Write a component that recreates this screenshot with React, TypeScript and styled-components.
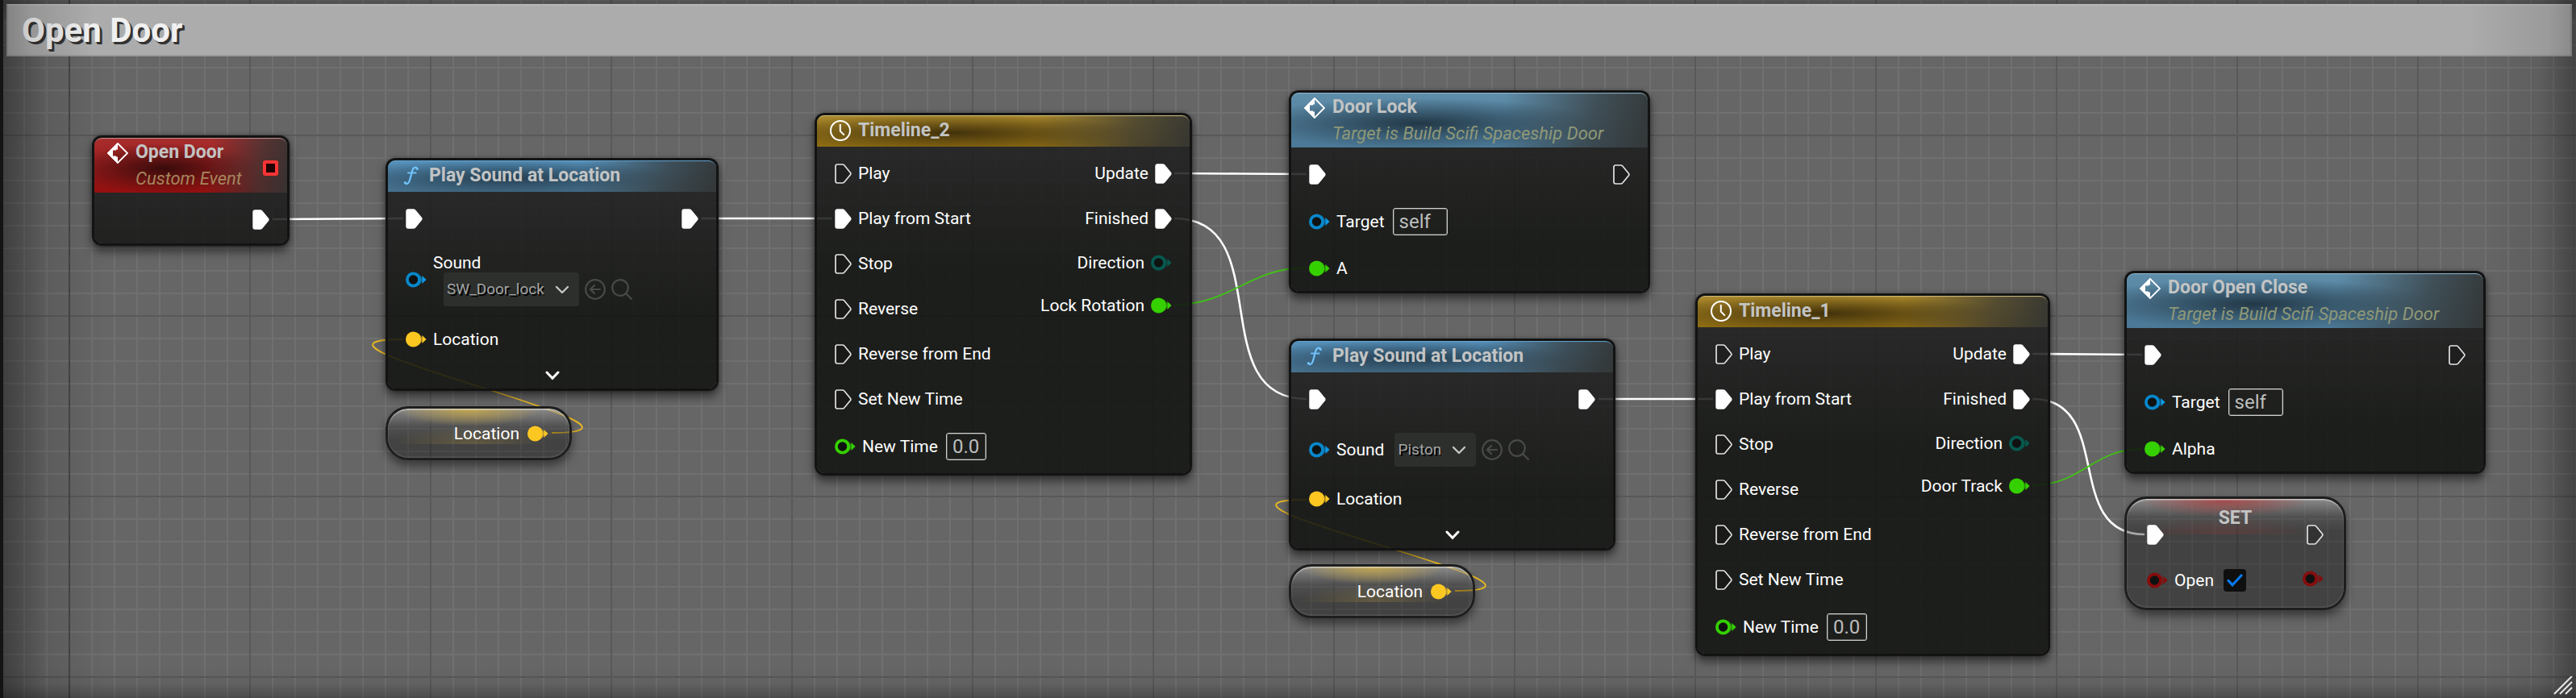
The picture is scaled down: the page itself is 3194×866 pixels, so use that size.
import React, { ReactNode } from "react";
import styled, { createGlobalStyle, css } from "styled-components";

const GlobalStyle = createGlobalStyle`
  *, *::before, *::after { box-sizing: border-box; }
  html, body { margin: 0; background: #141414; }
  body { font-family: Roboto, "Open Sans", sans-serif; color: #fff; }
  button, input, select { font: inherit; color: inherit; margin: 0; }
  button { padding: 0; border: 0; background: none; cursor: pointer; }
  svg { display: block; }
`;

/* ---------- canvas ---------- */

const Graph = styled.main`
  position: relative;
  min-height: 100vh;
  padding: 5px 5px 0 4px;
  overflow: hidden;
  border-left: 4px solid #141414;
  background:
    linear-gradient(90deg, rgba(0, 0, 0, 0.38), rgba(0, 0, 0, 0.26) 24px, rgba(0, 0, 0, 0.1) 52px, transparent 130px),
    linear-gradient(270deg, rgba(0, 0, 0, 0.34), rgba(0, 0, 0, 0.22) 20px, rgba(0, 0, 0, 0.08) 46px, transparent 120px),
    linear-gradient(0deg, rgba(0, 0, 0, 0.26), rgba(0, 0, 0, 0.05) 18px, transparent 40px),
    linear-gradient(180deg, rgba(0, 0, 0, 0.22), transparent 30px),
    linear-gradient(#464646, #464646) 81px 0 / 2px 100% no-repeat,
    linear-gradient(90deg, #595959 2px, transparent 2px) 81px 0 / 224px 224px,
    linear-gradient(180deg, #595959 2px, transparent 2px) 0 167px / 224px 224px,
    linear-gradient(90deg, #707070 2px, transparent 2px) 25px 0 / 28px 28px,
    linear-gradient(180deg, #707070 2px, transparent 2px) 0 27px / 28px 28px,
    #666;
`;

const CommentBar = styled.header`
  position: relative;
  display: flex;
  align-items: center;
  height: 65px;
  padding: 0 17px;
  background: #acacac;
  border: 2px solid #9a9a9a;
  border-top-color: #b8b8b8;
  &::after {
    content: "";
    position: absolute;
    inset: -2px;
    pointer-events: none;
    background:
      linear-gradient(90deg, rgba(0, 0, 0, 0.24), rgba(0, 0, 0, 0.13) 30px, transparent 110px),
      linear-gradient(270deg, rgba(0, 0, 0, 0.2), rgba(0, 0, 0, 0.1) 30px, transparent 130px);
  }
`;

const CommentTitle = styled.h1`
  margin: 0;
  font-size: 42px;
  line-height: 48px;
  font-weight: 700;
  color: #f0f0f0;
  text-shadow: 2px 2px 0 #333, 3px 3px 0 #333;
`;

const Wires = styled.svg`
  position: absolute;
  left: -4px;
  top: 0;
  overflow: visible;
  pointer-events: none;
  fill: none;
`;

const Resizer = styled.svg`
  position: absolute;
  right: 4px;
  bottom: 4px;
`;

/* ---------- nodes ---------- */

interface Placed { $x: number; $y: number; $w: number }

const placed = css<Placed>`
  position: absolute;
  left: ${p => p.$x - 4}px;
  top: ${p => p.$y}px;
  width: ${p => p.$w}px;
`;

const NodeBox = styled.article<Placed>`
  ${placed}
  border: 3px solid #121312;
  border-radius: 12px;
  background: linear-gradient(180deg, rgba(29, 30, 29, 0.86) 42px, rgba(16, 18, 15, 0.86) 190px) padding-box;
  box-shadow: 0 7px 12px rgba(0, 0, 0, 0.5), 0 0 4px rgba(0, 0, 0, 0.35);
`;

const tones = {
  red: { top: "#a82d2d", base: "#940f0f", dark: "rgba(52, 10, 10, 0.95)", shine: "#c98f8f" },
  blue: { top: "#5f8eab", base: "#4a7896", dark: "rgba(32, 52, 66, 0.95)", shine: "#8fb4cc" },
  sky: { top: "#5590ba", base: "#47718d", dark: "rgba(32, 54, 70, 0.9)", shine: "#65a5d0" },
  gold: { top: "#a8872c", base: "#8f6d12", dark: "rgba(62, 46, 10, 0.95)", shine: "#d2bd80" },
};
type Tone = keyof typeof tones;

const NodeHeader = styled.header<{ $tone: Tone; $tall: boolean }>`
  display: flex;
  align-items: ${p => (p.$tall ? "flex-start" : "center")};
  gap: 9px;
  height: ${p => (p.$tall ? 68 : 39)}px;
  padding: ${p => (p.$tall ? "6px 11px 0 16px" : "0 11px 2px 16px")};
  border-radius: 9px 9px 0 0;
  box-shadow: inset 0 2px 1px -1px ${p => tones[p.$tone].shine};
  background:
    linear-gradient(100deg, transparent 58%, rgba(52, 54, 53, 0.7) 84%, rgba(50, 52, 51, 0.95) 100%),
    radial-gradient(ellipse ${p => (p.$tall ? "50% 46%" : "52% 58%")} at 36% 56%, ${p => tones[p.$tone].dark}, transparent),
    linear-gradient(180deg, ${p => tones[p.$tone].top}, ${p => tones[p.$tone].base});
`;

const IconSlot = styled.span`
  display: flex;
  flex: none;
  justify-content: center;
  width: 26px;
`;

const Titles = styled.div`
  flex: 1;
  white-space: nowrap;
`;

const NodeTitle = styled.h2`
  margin: 0;
  font-size: 23px;
  line-height: 24px;
  font-weight: 700;
  color: #c2c4c4;
`;

const Subtitle = styled.p<{ $color: string }>`
  margin: 9px 0 0;
  font-size: 22px;
  line-height: 24px;
  font-style: italic;
  color: ${p => p.$color};
`;

const DelegateButton = styled.button`
  align-self: center;
  width: 19px;
  height: 19px;
  border: 4px solid #ff3434;
  border-radius: 3px;
  background: #210202;
`;

const Body = styled.div<{ $flush?: boolean }>`
  display: flex;
  flex-direction: column;
  padding: 5px 0 ${p => (p.$flush ? 0 : 2)}px;
`;

const Columns = styled.div`
  display: flex;
  justify-content: space-between;
  padding: 0 22px;
`;

const Column = styled.div<{ $end?: boolean }>`
  display: flex;
  flex-direction: column;
  align-items: ${p => (p.$end ? "flex-end" : "flex-start")};
`;

const Row = styled.div<{ $h: number }>`
  display: flex;
  align-items: center;
  gap: 8px;
  height: ${p => p.$h}px;
`;

const labelText = css`
  font-size: 21px;
  line-height: 24px;
  white-space: nowrap;
  color: #fff;
`;

const PinText = styled.span`${labelText}`;
const FieldLabel = styled.label`${labelText}`;

const ValueInput = styled.input<{ $w: number }>`
  width: ${p => p.$w}px;
  height: 34px;
  padding: 0 7px;
  border: 1px solid #d0d1d0;
  border-radius: 3px;
  outline: 1px solid rgba(196, 197, 196, 0.35);
  outline-offset: -2px;
  background: transparent;
  font-size: 24px;
  line-height: 24px;
  color: #bcbdbc;
  && { margin-left: 2px; }
`;

const SoundField = styled.div<{ $stacked: boolean }>`
  display: flex;
  flex-direction: ${p => (p.$stacked ? "column" : "row")};
  align-items: ${p => (p.$stacked ? "flex-start" : "center")};
  gap: ${p => (p.$stacked ? 0 : 13)}px;
`;

const AssetPicker = styled.div<{ $indent: boolean }>`
  display: flex;
  align-items: center;
  gap: 7px;
  margin-left: ${p => (p.$indent ? 13 : 0)}px;
`;

const SelectWrap = styled.div`
  position: relative;
  svg {
    position: absolute;
    right: 12px;
    top: 16px;
    pointer-events: none;
  }
`;

const AssetSelect = styled.select`
  appearance: none;
  height: 42px;
  padding: 0 43px 0 4px;
  border: 0;
  border-radius: 4px;
  background: #2d2f2d;
  font-size: 19px;
  line-height: 24px;
  color: #a4a5a4;
  text-shadow: 2px 2px 0 #000;
`;

const ExpandButton = styled.button`
  display: flex;
  align-items: center;
  justify-content: center;
  height: 35px;
  && { padding-top: 3px; }
`;

const glass = css<{ $glow: string }>`
  border: 3px solid #1d1e1d;
  border-radius: 28px;
  background:
    radial-gradient(ellipse 40% 100% at 45% 0, rgba(${p => p.$glow}, 0.75), transparent) 0 0 / 100% 22px no-repeat padding-box,
    radial-gradient(ellipse 42% 100% at 45% 100%, rgba(${p => p.$glow}, 0.22), transparent) 0 22px / 100% 22px no-repeat padding-box,
    linear-gradient(180deg, rgba(255, 255, 255, 0.38), rgba(255, 255, 255, 0.08) 22px, transparent 40px) padding-box,
    rgba(0, 0, 0, 0.35) padding-box;
  box-shadow: 0 7px 12px rgba(0, 0, 0, 0.45), inset 0 2px 2px -1px rgba(255, 255, 255, 0.8), inset 0 -1px 2px rgba(255, 255, 255, 0.15);
`;

const VariableNode = styled.article<Placed & { $glow: string }>`
  ${placed}
  ${glass}
  display: flex;
  align-items: center;
  justify-content: flex-end;
  gap: 10px;
  height: 67px;
  padding-right: 26px;
`;

const SetNode = styled.article<Placed & { $glow: string }>`
  ${placed}
  ${glass}
  padding: 12px 25px 6px;
`;

const SetTitle = styled(NodeTitle)`
  text-align: center;
`;

const SetPins = styled.div`
  display: flex;
  justify-content: space-between;
  margin-top: -20px;
`;

const CheckWrap = styled.span`
  display: grid;
  place-items: center;
  width: 28px;
  height: 28px;
  margin-left: 4px;
  > * { grid-area: 1 / 1; }
  svg { pointer-events: none; }
`;

const CheckInput = styled.input`
  appearance: none;
  width: 28px;
  height: 28px;
  border-radius: 4px;
  background: #0e0f0e;
  & + svg { visibility: hidden; }
  &:checked + svg { visibility: visible; }
`;

/* ---------- icons ---------- */

const ExecPin = ({ on }: { on?: boolean }) => (
  <svg width="21" height="25" viewBox="0 0 21 25">
    <path
      d="M1 3.2Q1 1 3.2 1H9.5Q10.8 1 11.8 2L19.4 11.2Q20.4 12.5 19.4 13.8L11.8 23Q10.8 24 9.5 24H3.2Q1 24 1 21.8Z"
      fill={on ? "#fff" : "rgba(20,21,20,.35)"} stroke={on ? "#fff" : "#e2e2e2"} strokeWidth={on ? 1.4 : 1.7}
    />
  </svg>
);

const DataPin = ({ color, on, edge }: { color: string; on?: boolean; edge?: string }) => (
  <svg width="26" height="20" viewBox="0 0 26 20">
    <path d="M12 1.5Q19 3 21 10Q19 17 12 18.5Z" fill={color} opacity=".6" />
    {on
      ? <circle cx="9.5" cy="10" r="9.5" fill={color} />
      : <circle cx="9.5" cy="10" r="7.6" fill="#0f1211" stroke={color} strokeWidth="3.8" />}
    <path d="M20.4 5L25.6 10L20.4 15Z" fill={edge || color} />
  </svg>
);

const EventIcon = () => (
  <svg width="26" height="26" viewBox="0 0 26 26">
    <path d="M13 1L25 13L13 25L1 13Z" fill="none" stroke="#fff" strokeWidth="1.8" />
    <path fillRule="evenodd" d="M13 0L0 13L13 26V17.5H11V16.5H7V9.5H11V8.5H13Z" fill="#fff" />
  </svg>
);

const FunctionIcon = () => (
  <svg width="20" height="24" viewBox="0 0 20 24">
    <g fill="none" stroke="#6fc0f8" strokeLinecap="round">
      <path d="M17.4 3.4C16 .9 12.6 1.2 11.4 5.2L7.8 18.2C6.8 21.8 3.9 23 2 21" strokeWidth="2.3" />
      <path d="M6 8.6H15.6" strokeWidth="2" />
    </g>
    <circle cx="17.4" cy="3.4" r="1.5" fill="#6fc0f8" />
    <circle cx="2.4" cy="20.6" r="1.6" fill="#6fc0f8" />
  </svg>
);

const ClockIcon = () => (
  <svg width="26" height="26" viewBox="0 0 26 26" fill="none" stroke="#fff">
    <circle cx="13" cy="13" r="12" strokeWidth="2" />
    <path d="M12.8 5V13.6L17.8 18.6" strokeWidth="2" />
  </svg>
);

const SmallChevron = () => (
  <svg width="18" height="11" viewBox="0 0 18 11" fill="none" stroke="#c4c5c4" strokeWidth="2.4" strokeLinecap="round" strokeLinejoin="round">
    <path d="M2 2L9 9L16 2" />
  </svg>
);

const ExpandIcon = () => (
  <svg width="18" height="12" viewBox="0 0 18 12" fill="none" stroke="#fff" strokeWidth="3" strokeLinecap="round">
    <path d="M2 2L9 9.4L16 2" />
  </svg>
);

const UseIcon = () => (
  <svg width="26" height="26" viewBox="0 0 26 26" fill="none" stroke="#484a48" strokeWidth="2.2" strokeLinecap="round">
    <circle cx="13" cy="13" r="11.8" />
    <path d="M19 13H7.5M12 8L7 13L12 18" />
  </svg>
);

const BrowseIcon = () => (
  <svg width="26" height="26" viewBox="0 0 26 26" fill="none" stroke="#484a48" strokeWidth="2.2" strokeLinecap="round">
    <circle cx="11" cy="11" r="9.8" />
    <path d="M18 18L25 25" />
  </svg>
);

const CheckIcon = () => (
  <svg width="20" height="16" viewBox="0 0 20 16" fill="none" stroke="#0a78ee" strokeWidth="3.2" strokeLinecap="round">
    <path d="M2 8.4L7 13.8L18 2" />
  </svg>
);

/* ---------- node kinds ---------- */

const BLUE = "#0887cb";
const GREEN = "#35d000";
const YELLOW = "#fdc722";
const TEAL = "#06594f";
const RED = "#850d0d";

interface NodeProps extends Placed {
  tone: Tone;
  icon: ReactNode;
  title: string;
  subtitle?: string;
  subtitleColor?: string;
  action?: ReactNode;
  flush?: boolean;
  children: ReactNode;
}

const GraphNode = ({ tone, icon, title, subtitle, subtitleColor = "#8f9877", action, flush, children, ...place }: NodeProps) => (
  <NodeBox {...place}>
    <NodeHeader $tone={tone} $tall={!!subtitle}>
      <IconSlot>{icon}</IconSlot>
      <Titles>
        <NodeTitle>{title}</NodeTitle>
        {subtitle && <Subtitle $color={subtitleColor}>{subtitle}</Subtitle>}
      </Titles>
      {action}
    </NodeHeader>
    <Body $flush={flush}>{children}</Body>
  </NodeBox>
);

const PlaySoundNode = ({ id, sound, stacked, ...place }: Placed & { id: string; sound: string; stacked: boolean }) => (
  <GraphNode {...place} tone="sky" icon={<FunctionIcon />} title="Play Sound at Location" flush>
    <Columns>
      <Column>
        <Row $h={56}><ExecPin on /></Row>
        <Row $h={stacked ? 96 : 70}>
          <DataPin color={BLUE} edge="#0d9ae6" />
          <SoundField $stacked={stacked}>
            <FieldLabel htmlFor={id}>Sound</FieldLabel>
            <AssetPicker $indent={stacked}>
              <SelectWrap>
                <AssetSelect id={id}><option>{sound}</option></AssetSelect>
                <SmallChevron />
              </SelectWrap>
              <button type="button" aria-label="Use selected asset"><UseIcon /></button>
              <button type="button" aria-label="Browse to asset"><BrowseIcon /></button>
            </AssetPicker>
          </SoundField>
        </Row>
        <Row $h={52}><DataPin color={YELLOW} on /><PinText>Location</PinText></Row>
      </Column>
      <Column $end>
        <Row $h={56}><ExecPin on /></Row>
      </Column>
    </Columns>
    <ExpandButton type="button" aria-label="Show more pins"><ExpandIcon /></ExpandButton>
  </GraphNode>
);

const timelineInputs = ["Play", "Play from Start", "Stop", "Reverse", "Reverse from End", "Set New Time"];

const TimelineNode = ({ id, name, track, ...place }: Placed & { id: string; name: string; track: string }) => (
  <GraphNode {...place} tone="gold" icon={<ClockIcon />} title={name}>
    <Columns>
      <Column>
        {timelineInputs.map(label => (
          <Row $h={56} key={label}>
            <ExecPin on={label === "Play from Start"} />
            <PinText>{label}</PinText>
          </Row>
        ))}
        <Row $h={62}>
          <DataPin color={GREEN} />
          <FieldLabel htmlFor={id}>New Time</FieldLabel>
          <ValueInput id={id} $w={50} defaultValue="0.0" />
        </Row>
      </Column>
      <Column $end>
        <Row $h={56}><PinText>Update</PinText><ExecPin on /></Row>
        <Row $h={56}><PinText>Finished</PinText><ExecPin on /></Row>
        <Row $h={53}><PinText>Direction</PinText><DataPin color={TEAL} /></Row>
        <Row $h={53}><PinText>{track}</PinText><DataPin color={GREEN} on /></Row>
      </Column>
    </Columns>
  </GraphNode>
);

const DoorEventNode = ({ id, name, value, ...place }: Placed & { id: string; name: string; value: string }) => (
  <GraphNode {...place} tone="blue" icon={<EventIcon />} title={name} subtitle="Target is Build Scifi Spaceship Door">
    <Columns>
      <Column>
        <Row $h={56}><ExecPin on /></Row>
        <Row $h={62}>
          <DataPin color={BLUE} edge="#0d9ae6" />
          <FieldLabel htmlFor={id}>Target</FieldLabel>
          <ValueInput id={id} $w={68} defaultValue="self" />
        </Row>
        <Row $h={53}><DataPin color={GREEN} on /><PinText>{value}</PinText></Row>
      </Column>
      <Column $end>
        <Row $h={56}><ExecPin /></Row>
      </Column>
    </Columns>
  </GraphNode>
);

const LocationNode = (place: Placed) => (
  <VariableNode {...place} $glow="214, 176, 60">
    <PinText>Location</PinText>
    <DataPin color={YELLOW} on />
  </VariableNode>
);

/* A wire leaves its source to the right and enters its target from the left. */
const wire = (x1: number, y1: number, x2: number, y2: number, reach: number) =>
  `M${x1} ${y1}C${x1 + reach} ${y1} ${x2 - reach} ${y2} ${x2} ${y2}`;

const execWires = [
  wire(338, 272, 500, 271, 54),
  wire(870, 271, 1032, 271, 54),
  wire(1456, 215, 1620, 216, 54),
  wire(1456, 271, 1620, 495, 129),
  wire(1982, 495, 2124, 495, 48),
  wire(2520, 439, 2656, 440, 46),
  wire(2520, 495, 2659, 663, 103),
];
const floatWires = [wire(1456, 378, 1620, 332, 70), wire(2520, 602, 2656, 557, 61)];
const vectorWires = [wire(684, 537, 500, 421, 183), wire(1804, 733, 1620, 620, 183)];

export default function App() {
  return (
    <>
      <GlobalStyle />
      <Graph>
        <CommentBar><CommentTitle>Open Door</CommentTitle></CommentBar>

        <Wires width="1" height="1" aria-hidden="true">
          {execWires.map(d => <path key={d} d={d} stroke="#fff" strokeWidth="2.6" />)}
          {floatWires.map(d => <path key={d} d={d} stroke="#3fc414" strokeWidth="1.8" />)}
          {vectorWires.map(d => <path key={d} d={d} stroke="#eebb22" strokeWidth="1.8" />)}
        </Wires>

        <GraphNode
          $x={114} $y={168} $w={245} tone="red" icon={<EventIcon />} title="Open Door"
          subtitle="Custom Event" subtitleColor="#a5865c"
          action={<DelegateButton type="button" aria-label="Output delegate" />}
        >
          <Columns>
            <Column />
            <Column $end><Row $h={56}><ExecPin on /></Row></Column>
          </Columns>
        </GraphNode>

        <PlaySoundNode $x={478} $y={196} $w={413} id="sound-lock" sound="SW_Door_lock" stacked />
        <LocationNode $x={478} $y={504} $w={231} />
        <TimelineNode $x={1010} $y={140} $w={468} id="time-2" name="Timeline_2" track="Lock Rotation" />
        <DoorEventNode $x={1598} $y={112} $w={448} id="target-lock" name="Door Lock" value="A" />
        <PlaySoundNode $x={1598} $y={420} $w={405} id="sound-piston" sound="Piston" stacked={false} />
        <LocationNode $x={1598} $y={700} $w={231} />
        <TimelineNode $x={2102} $y={364} $w={440} id="time-1" name="Timeline_1" track="Door Track" />
        <DoorEventNode $x={2634} $y={336} $w={448} id="target-open" name="Door Open Close" value="Alpha" />

        <SetNode $x={2634} $y={616} $w={275} $glow="176, 52, 52">
          <SetTitle>SET</SetTitle>
          <SetPins>
            <Column>
              <Row $h={56}><ExecPin on /></Row>
              <Row $h={57}>
                <DataPin color={RED} />
                <FieldLabel htmlFor="set-open">Open</FieldLabel>
                <CheckWrap>
                  <CheckInput id="set-open" type="checkbox" defaultChecked />
                  <CheckIcon />
                </CheckWrap>
              </Row>
            </Column>
            <Column $end>
              <Row $h={56}><ExecPin /></Row>
              <Row $h={53}><DataPin color={RED} /></Row>
            </Column>
          </SetPins>
        </SetNode>

        <Resizer width="24" height="23" viewBox="0 0 24 23" stroke="#e2e2e2" strokeWidth="2.2" aria-hidden="true">
          <path d="M1 22L23 0M8 22L23 7M15 22L23 14" />
        </Resizer>
      </Graph>
    </>
  );
}
